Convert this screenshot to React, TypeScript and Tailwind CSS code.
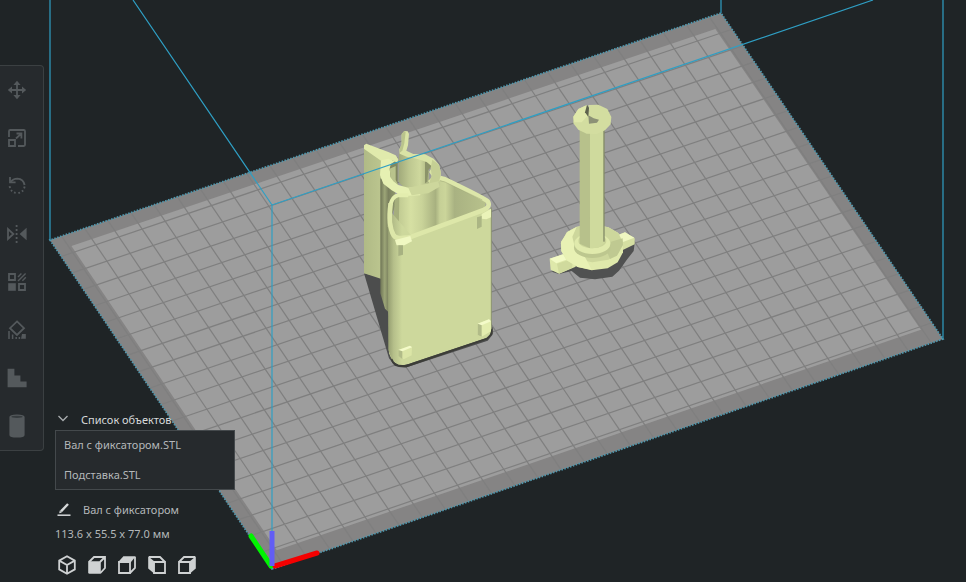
import type { ReactNode } from "react";

type Point = [number, number];

// Build plate corners on screen
const FRONT: Point = [272, 569];
const RIGHT: Point = [943, 339];
const BACK: Point = [721, 13];
const LEFT: Point = [50, 240];

const COLUMNS = 29;
const ROWS = 20;

function onPlate(u: number, v: number): Point {
  const mix = (i: 0 | 1) =>
    FRONT[i] * (1 - u) * (1 - v) + RIGHT[i] * u * (1 - v) + LEFT[i] * (1 - u) * v + BACK[i] * u * v;
  return [mix(0), mix(1)];
}

function segment(from: Point, to: Point) {
  return `M${from.map((n) => n.toFixed(1)).join(" ")}L${to.map((n) => n.toFixed(1)).join(" ")}`;
}

const gridPath = [
  ...Array.from({ length: COLUMNS }, (_, i) => (i + 0.5) / COLUMNS).map((u) => segment(onPlate(u, 0), onPlate(u, 1))),
  ...Array.from({ length: ROWS - 1 }, (_, i) => (i + 1) / ROWS).map((v) => segment(onPlate(0, v), onPlate(1, v))),
].join("");

const plate = [FRONT, RIGHT, BACK, LEFT].join(" ");
const printable = [onPlate(0.021, 0.042), onPlate(0.981, 0.042), onPlate(0.98, 0.965), onPlate(0.021, 0.967)].join(" ");

function BuildPlate() {
  return (
    <g>
      <polygon points={plate} fill="#858484" />
      <polygon points={printable} fill="#9d9d9d" />
      <path d={gridPath} stroke="#7f7f7f" strokeWidth="1.2" fill="none" />
      <polygon points={plate} fill="none" stroke="#4f97ad" strokeWidth="1.8" strokeDasharray="1.5 1.5" />
    </g>
  );
}

function HolderModel() {
  return (
    <g transform="translate(345 120) scale(0.33333)">
      <path d="M57 460L107 472L128 560L150 720L420 640L443 620L442 645L428 662L185 742L150 738L132 715Z" fill="#4c4d4d" />
      {/* wing behind the holder */}
      <path d="M57 78L62 74L112 100V478L57 460Z" fill="url(#wing)" />
      <path d="M106 175L150 200V260L134 300V580L120 566L106 520Z" fill="url(#side)" />
      <path d="M112 120L158 112V200L112 190Z" fill="#80875f" />
      <path d="M57 86V76L64 71L130 96L152 106L160 118L157 128L140 120L108 122L62 90Z" fill="#e0eaac" />
      {/* box interior */}
      <path d="M150 228L285 172L425 240L418 268L200 348L150 345Z" fill="url(#inside)" />
      <path d="M160 225L285 185L284 322L200 345L156 338L150 250Z" fill="url(#post)" />
      <path d="M150 234L163 230L161 338L152 330L146 290Z" fill="#a5ae7c" />
      {/* clip */}
      <path d="M162 100L250 108L252 190L225 206L182 208L160 185Z" fill="url(#tube)" />
      <path d="M240 125L256 122L262 138L250 150L247 185L240 190Z" fill="#8b9369" />
      <path d="M170 42L178 33L188 34L192 42L189 76L184 92L205 102L240 103L266 116L282 134L288 160L285 180L272 191L253 189L249 183L262 170L252 156L262 140L245 126L215 116L185 110L164 101L163 88L170 75Z" fill="#d9e3a5" />
      <path d="M170 42L178 33L182 36L178 70L172 92L164 98V86L170 72Z" fill="#b9c38c" />
      <path d="M262 119L282 134L288 160L285 180L272 191L253 189L260 165L257 143Z" fill="#c5cf94" />
      <path d="M108 121L130 116L150 124L137 133L134 146L137 172L160 195L190 203L236 200L225 226L170 228L140 211L115 191L105 165Z" fill="#e6f0b2" />
      <path d="M190 203L280 184L284 200L250 220L200 226Z" fill="#cdd79c" />
      <path d="M134 146L152 138V180L160 195L145 184L137 172Z" fill="#b9c38c" />
      {/* front body */}
      <path d="M130 250L128 320L150 350L200 350L438 266V640L424 654L190 732L165 737L142 722L132 700Z" fill="#cdd89c" />
      <path d="M128 265L200 348V728L165 737L142 722L130 690Z" fill="url(#corner)" />
      <path d="M142 716Q150 740 185 734L424 654Q438 648 438 628L443 625V642L428 658L185 742Q140 744 138 716Z" fill="#3c3d38" />
      <path d="M439 262V628" stroke="#8e9770" strokeWidth="3" />
      <path d="M136 255Q142 230 158 226H190" fill="none" stroke="#e3edae" strokeWidth="12" strokeLinejoin="round" />
      <path d="M137 250Q128 315 146 346Q154 358 185 353L200 350L416 270Q438 260 428 244Q421 236 300 178L285 174" fill="none" stroke="#dde7a9" strokeWidth="14" strokeLinejoin="round" />
      <path d="M285 182L300 186L412 240" fill="none" stroke="#8f976d" strokeWidth="2" strokeOpacity="0.6" />
      {/* corner pads */}
      <path d="M150 360L196 348L201 364L178 376L155 376Z" fill="#f0f8c2" />
      <path d="M160 376L174 376V404L160 408Z" fill="#a7b181" />
      <path d="M410 282L438 266V292L424 298L410 296Z" fill="#eaf3b8" />
      <path d="M396 292L410 288V320L396 327Z" fill="#abb584" />
      <path d="M160 690L195 677L201 681L200 706L176 718L160 708Z" fill="#dbe5a6" />
      <path d="M160 690L195 677L201 682L172 694Z" fill="#f4fbc9" />
      <path d="M172 694V717L160 708V690Z" fill="#b1bb88" />
      <path d="M398 611L432 598L438 604V634L410 650L398 645Z" fill="#e3edae" />
      <path d="M398 611L432 598L438 604L410 616Z" fill="#f4fbc9" />
      <path d="M410 616V650L398 645V611Z" fill="#b1bb88" />
    </g>
  );
}

function ShaftModel() {
  return (
    <g transform="translate(535 95) scale(0.33333)">
      <path d="M50 530L110 505L260 460L299 445L296 468L275 495L252 527L232 545L180 553L135 548L110 528L72 537Z" fill="#505151" />
      <path d="M44 491L84 478L122 492V515L72 536L47 524Z" fill="#dee8aa" />
      <path d="M44 491L84 478L110 488L64 505Z" fill="#f2fac5" />
      <path d="M66 506L112 491V518L72 536Z" fill="#d0da9d" />
      <path d="M240 424L270 412L299 430V448L262 466L240 455Z" fill="#d5dfa2" />
      <path d="M240 424L270 412L298 428L262 442Z" fill="#eff7c1" />
      <path d="M78 445L95 412L125 395L172 388L220 397L250 414L264 445V472L248 502L218 520L170 526L128 516L95 496L79 468Z" fill="#dfe9ab" />
      <path d="M84 440L98 412L125 396L172 388L220 397L250 414L262 440L252 472L220 494L172 502L125 493L95 472Z" fill="#cdd79c" />
      <path d="M78 440L98 410L125 396L112 425L120 458L150 486L170 524L128 516L95 496L79 468Z" fill="#e8f1b4" />
      <path d="M228 440L263 430L264 450L246 482L225 492L215 468Z" fill="#bfc991" />
      <ellipse cx="172" cy="458" rx="55" ry="31" fill="#bdc78f" />
      <ellipse cx="172" cy="446" rx="54" ry="31" fill="#e0eaac" />
      <ellipse cx="172" cy="438" rx="42" ry="22" fill="#cbd59a" />
      <path d="M134 95H165V460L134 446Z" fill="#b7c18b" />
      <path d="M165 95H208V444L190 458L165 460Z" fill="#cfda9d" />
      <path d="M207 105V440" stroke="#6a7054" strokeWidth="3" />
      <path d="M115 65L130 42L155 30L163 52L160 30L190 29L217 42L229 66L227 88L210 106L185 117L155 116L130 104L115 85Z" fill="#d3dda0" />
      <path d="M115 65L130 42L152 32L160 60L140 82L118 82Z" fill="#dfe8aa" />
      <path d="M156 30L162 38L160 66L150 52Z" fill="#5e624d" />
      <path d="M160 61L176 70L192 74L186 83L162 86Z" fill="#8c9176" />
    </g>
  );
}

function Scene() {
  return (
    <svg
      className="absolute inset-0 h-full w-full"
      viewBox="0 0 966 582"
      preserveAspectRatio="xMidYMid slice"
      aria-hidden="true"
    >
      <defs>
        <linearGradient id="wing">
          <stop offset="0" stopColor="#b0ba86" />
          <stop offset="1" stopColor="#bcc68f" />
        </linearGradient>
        <linearGradient id="side">
          <stop offset="0" stopColor="#6f7556" />
          <stop offset="0.3" stopColor="#9ca577" />
          <stop offset="0.55" stopColor="#7b815f" />
          <stop offset="1" stopColor="#8d956c" />
        </linearGradient>
        <linearGradient id="inside">
          <stop offset="0.4" stopColor="#bec891" />
          <stop offset="0.55" stopColor="#cbd59a" />
          <stop offset="0.65" stopColor="#a9b282" />
          <stop offset="1" stopColor="#b8c28c" />
        </linearGradient>
        <linearGradient id="post">
          <stop offset="0" stopColor="#bac48d" />
          <stop offset="0.35" stopColor="#d6e0a3" />
          <stop offset="0.6" stopColor="#c9d399" />
          <stop offset="0.9" stopColor="#a8b180" />
          <stop offset="1" stopColor="#c6d097" />
        </linearGradient>
        <linearGradient id="tube">
          <stop offset="0" stopColor="#a0a97a" />
          <stop offset="0.35" stopColor="#bdc790" />
          <stop offset="0.7" stopColor="#ced89d" />
          <stop offset="1" stopColor="#a9b281" />
        </linearGradient>
        <linearGradient id="corner">
          <stop offset="0" stopColor="#939c6f" />
          <stop offset="0.25" stopColor="#b5bf8a" />
          <stop offset="0.6" stopColor="#cdd89c" />
        </linearGradient>
      </defs>
      <BuildPlate />
      <HolderModel />
      <ShaftModel />
      {/* build volume */}
      <g stroke="#2f9fc4" fill="none">
        <path d="M50 240V0M943 339V0M721 13V0" strokeWidth="1.2" />
        <path d="M272 205L133 0M272 205L873 0M272 205V569" strokeWidth="1.2" />
      </g>
      <g strokeWidth="5" strokeLinecap="round">
        <path d="M251 536L271 566" stroke="#00f400" />
        <path d="M275 566L317 553" stroke="#f40000" />
        <path d="M272 531V566" stroke="#625df5" strokeLinecap="butt" />
      </g>
    </svg>
  );
}

function Glyph({ children }: { children: ReactNode }) {
  return (
    <svg className="size-5" viewBox="0 0 20 20" fill="none" stroke="currentColor" strokeWidth="1.8" aria-hidden="true">
      {children}
    </svg>
  );
}

const tools = [
  {
    name: "Перемещение",
    glyph: (
      <>
        <path d="M10 3V17M3 10H17" strokeWidth="1.8" />
        <path d="M10 .8L13.6 5H6.4ZM10 19.2L13.6 15H6.4ZM.8 10L5 6.4V13.6ZM19.2 10L15 6.4V13.6Z" fill="currentColor" stroke="none" />
      </>
    ),
  },
  {
    name: "Масштабирование",
    glyph: (
      <>
        <path d="M2 9V3.2Q2 2 3.2 2H16.8Q18 2 18 3.2V16.8Q18 18 16.8 18H11" />
        <path d="M2 12H8V18H2ZM9 10.5L14 5.8M9.5 5.5H14.4V10.5" />
      </>
    ),
  },
  {
    name: "Вращение",
    glyph: (
      <>
        <path d="M3 1V6.4H8.6" />
        <path d="M3.6 6Q6 2.6 10.4 2.6Q16.4 3 17.6 9" strokeWidth="1.9" />
        <path d="M17.6 10.5Q16.4 17 10 17Q3.6 16.6 2.6 10" strokeDasharray="1.7 2.3" strokeWidth="1.9" />
      </>
    ),
  },
  {
    name: "Зеркало",
    glyph: (
      <>
        <path d="M1 5V15L6.4 10Z" />
        <path d="M19.6 3.8V16.2L12.6 10Z" fill="currentColor" stroke="none" />
        <path d="M9.6 1V19" strokeDasharray="2 2" />
      </>
    ),
  },
  {
    name: "Параметры модели",
    glyph: (
      <>
        <path d="M2 2H8V8H2ZM12 12H18V18H12Z" />
        <path d="M1.2 11.2H8.8V18.8H1.2Z" fill="currentColor" stroke="none" />
        <path d="M11 5L14.4 1.4M11 9L18.6 1.4M15.4 8.8L18.8 5.2" strokeWidth="1.4" />
      </>
    ),
  },
  {
    name: "Блокировка поддержек",
    glyph: (
      <>
        <path d="M10 1.4L17 8.2L10 15L3 8.2Z" />
        <path d="M2 11V19M5.6 14.4V19M9.2 17V19M12.4 17V19" strokeWidth="1.5" />
        <path d="M15 14H18.8V18.8H14Z" fill="currentColor" stroke="none" />
      </>
    ),
  },
  {
    name: "Ступени",
    glyph: <path d="M.6 .8H7.4V7.4H13.4V13.4H19.6V19.2H.6Z" fill="currentColor" stroke="none" />,
  },
  {
    name: "Цилиндр",
    glyph: (
      <>
        <path d="M2.4 1Q2.4-1.6 10-1.6T17.6 1V19Q17.6 21.6 10 21.6T2.4 19Z" fill="currentColor" stroke="none" />
        <ellipse cx="10" cy="0.8" rx="5.6" ry="1.1" fill="#363b3e" stroke="none" />
      </>
    ),
  },
];

function Toolbar() {
  return (
    <nav
      aria-label="Инструменты"
      className="relative mt-[65px] flex w-11 shrink-0 flex-col self-start rounded-r border border-l-0 border-[#3b4042] bg-[#262a2d]"
    >
      {tools.map((tool) => (
        <button
          key={tool.name}
          type="button"
          aria-label={tool.name}
          className="flex h-12 w-[34px] items-center justify-center text-[#54595c] [&>svg]:overflow-visible"
        >
          <Glyph>{tool.glyph}</Glyph>
        </button>
      ))}
    </nav>
  );
}

const views = [
  {
    name: "Объёмный вид",
    glyph: <path d="M10 1.2L17.8 5.6V14.4L10 18.8L2.2 14.4V5.6ZM2.2 5.6L10 10L17.8 5.6M10 10V18.8" />,
  },
  {
    name: "Вид спереди",
    glyph: (
      <>
        <path d="M2 7L7 2H18V13L13.4 18M13 7L18 2" />
        <path d="M1.2 6.2H13.8V18.8H2.6Q1.2 18.8 1.2 17.4Z" fill="currentColor" stroke="none" />
      </>
    ),
  },
  {
    name: "Вид сверху",
    glyph: (
      <>
        <path d="M2 7H13V18H2ZM18 2V13L13 18" />
        <path d="M1.2 7L6.4 1.2H18.8L13.6 7.4H1.2Z" fill="currentColor" stroke="none" />
      </>
    ),
  },
  {
    name: "Вид слева",
    glyph: (
      <>
        <path d="M7 7H18V18H7ZM2 2H13L18 7" />
        <path d="M1.2 1.2L7.4 6.6V18.8L1.2 13.4Z" fill="currentColor" stroke="none" />
      </>
    ),
  },
  {
    name: "Вид справа",
    glyph: (
      <>
        <path d="M2 7H13V18H2ZM2 7L7 2H18" />
        <path d="M18.8 1.2L12.6 6.6V18.8L18.8 13.4Z" fill="currentColor" stroke="none" />
      </>
    ),
  },
];

const objects = ["Вал с фиксатором.STL", "Подставка.STL"];

function ObjectPanel() {
  return (
    <section className="relative ml-[11px] flex w-[180px] flex-col self-end pb-[7px] text-[11px] text-[#b4b8ba]">
      <button type="button" aria-expanded="true" className="flex h-5 items-center gap-3 pl-0.5 text-[#d6d9da]">
        <svg className="size-3.5 -translate-y-px text-[#a9adaf]" viewBox="0 0 14 14" fill="none" stroke="currentColor" strokeWidth="1.3" aria-hidden="true">
          <path d="M1.5 4L6 8.5L10.5 4" />
        </svg>
        <span className="-ml-0.5 whitespace-nowrap">Список объектов</span>
      </button>
      <ul className="flex flex-col gap-0.5 border border-[#44494c] bg-[#262a2d]">
        {objects.map((name) => (
          <li key={name} className="flex h-7 items-center px-2">
            {name}
          </li>
        ))}
      </ul>
      <label className="mt-1.5 flex h-7 items-center gap-3 pl-0.5">
        <svg className="size-3.5 shrink-0 text-[#d6d9da]" viewBox="0 0 14 14" fill="none" stroke="currentColor" aria-hidden="true">
          <path d="M.5 12.2H13.5" strokeWidth="1.5" />
          <path d="M4 8.4L11 1" strokeWidth="2.4" />
          <path d="M2.2 10.2L2.8 7.6L4.8 9.4Z" fill="currentColor" stroke="none" />
        </svg>
        <input
          aria-label="Имя объекта"
          defaultValue="Вал с фиксатором"
          className="min-w-0 flex-1 bg-transparent outline-none"
        />
      </label>
      <p className="h-6 leading-5">113.6 x 55.5 x 77.0 мм</p>
      <div className="mt-[7px] flex gap-2.5 pl-0.5 text-[#cfd2d3]">
        {views.map((view) => (
          <button key={view.name} type="button" aria-label={view.name}>
            <Glyph>{view.glyph}</Glyph>
          </button>
        ))}
      </div>
    </section>
  );
}

export default function App() {
  return (
    <main className="relative flex min-h-screen overflow-hidden bg-[#1f2426] font-['Noto_Sans',sans-serif]">
      <Scene />
      <Toolbar />
      <ObjectPanel />
    </main>
  );
}
